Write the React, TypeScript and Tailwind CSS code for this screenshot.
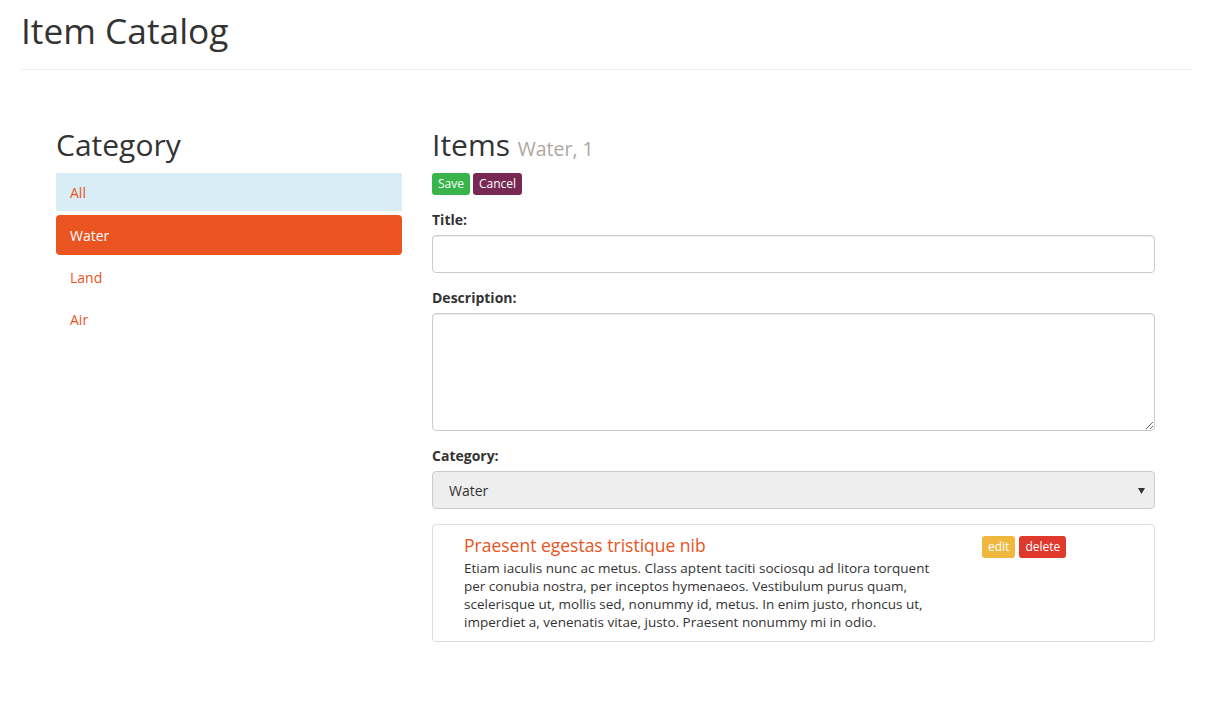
import React from "react";

export default function App() {
  return (
    <div className="min-h-[728px] bg-white text-[#333] text-[14px]" style={{ fontFamily: '"Open Sans", "Noto Sans", sans-serif' }}>
      <div className="px-[21px] w-[1212px]">
        <h1 className="pt-[10px] text-[35.3px] leading-[40px] font-normal text-[#333]">Item Catalog</h1>
        <div className="mt-[19px] h-px bg-[#eeeeee] w-[1170px]" />
      </div>
      <div className="flex pl-[56px] pt-[58px] gap-[30px]">
        <div className="w-[346px]">
          <h2 className="text-[30px] leading-[33px] font-normal text-[#333]">Category</h2>
          <ul className="mt-[12px] flex flex-col gap-[2px]">
            <li className="h-[38px] mb-[2px] bg-[#d9edf7] px-[14px] flex items-center text-[#e95420]">All</li>
            <li className="h-[40px] bg-[#e95420] rounded-[4px] px-[14px] flex items-center text-white">Water</li>
            <li className="h-[40px] px-[14px] flex items-center text-[#e95420]">Land</li>
            <li className="h-[40px] px-[14px] flex items-center text-[#e95420]">Air</li>
          </ul>
        </div>
        <div className="w-[723px]">
          <h2 className="text-[30px] leading-[33px] font-normal text-[#333]">
            Items <span className="text-[19.5px] text-[#aea79f]">Water, 1</span>
          </h2>
          <div className="mt-[8px] flex gap-[3px]">
            <button className="h-[22px] px-[6px] rounded-[3px] bg-[#38b44a] text-white text-[12px] leading-[22px]">Save</button>
            <button className="h-[22px] px-[6px] rounded-[3px] bg-[#772953] text-white text-[12px] leading-[22px]">Cancel</button>
          </div>
          <label className="block mt-[15px] font-bold text-[14px] leading-[20px]">Title:</label>
          <input className="mt-[5px] block w-full h-[38px] border border-[#ccc] rounded-[4px] shadow-[inset_0_1px_1px_rgba(0,0,0,0.075)] px-3 outline-none" />
          <label className="block mt-[15px] font-bold text-[14px] leading-[20px]">Description:</label>
          <textarea className="mt-[5px] block w-full h-[118px] border border-[#ccc] rounded-[4px] shadow-[inset_0_1px_1px_rgba(0,0,0,0.075)] px-3 outline-none" />
          <label className="block mt-[15px] font-bold text-[14px] leading-[20px]">Category:</label>
          <div className="mt-[5px] relative h-[38px] w-full border border-[#ccc] rounded-[4px] bg-[#eeeeee] flex items-center pl-[16px]">
            <span>Water</span>
            <svg className="absolute right-[9px] top-[16px]" width="7" height="6" viewBox="0 0 7 6">
              <path d="M0 0 H7 L3.5 6 Z" fill="#333" />
            </svg>
          </div>
          <div className="mt-[15px] border border-[#ddd] rounded-[4px] flex pl-[31px] pt-[9px] pb-[10px]">
            <div className="w-[518px]">
              <div className="text-[17.5px] leading-[22px] text-[#e95420]">Praesent egestas tristique nib</div>
              <p className="mt-[3px] text-[13.5px] leading-[18px] whitespace-nowrap">
                Etiam iaculis nunc ac metus. Class aptent taciti sociosqu ad litora torquent<br />
                per conubia nostra, per inceptos hymenaeos. Vestibulum purus quam,<br />
                scelerisque ut, mollis sed, nonummy id, metus. In enim justo, rhoncus ut,<br />
                imperdiet a, venenatis vitae, justo. Praesent nonummy mi in odio.
              </p>
            </div>
            <div className="flex gap-[4px] pt-[2px] items-start">
              <button className="h-[22px] px-[6px] rounded-[3px] bg-[#efb73e] text-white text-[12px] leading-[22px]">edit</button>
              <button className="h-[22px] px-[6px] rounded-[3px] bg-[#df382c] text-white text-[12px] leading-[22px]">delete</button>
            </div>
          </div>
        </div>
      </div>
    </div>
  );
}
